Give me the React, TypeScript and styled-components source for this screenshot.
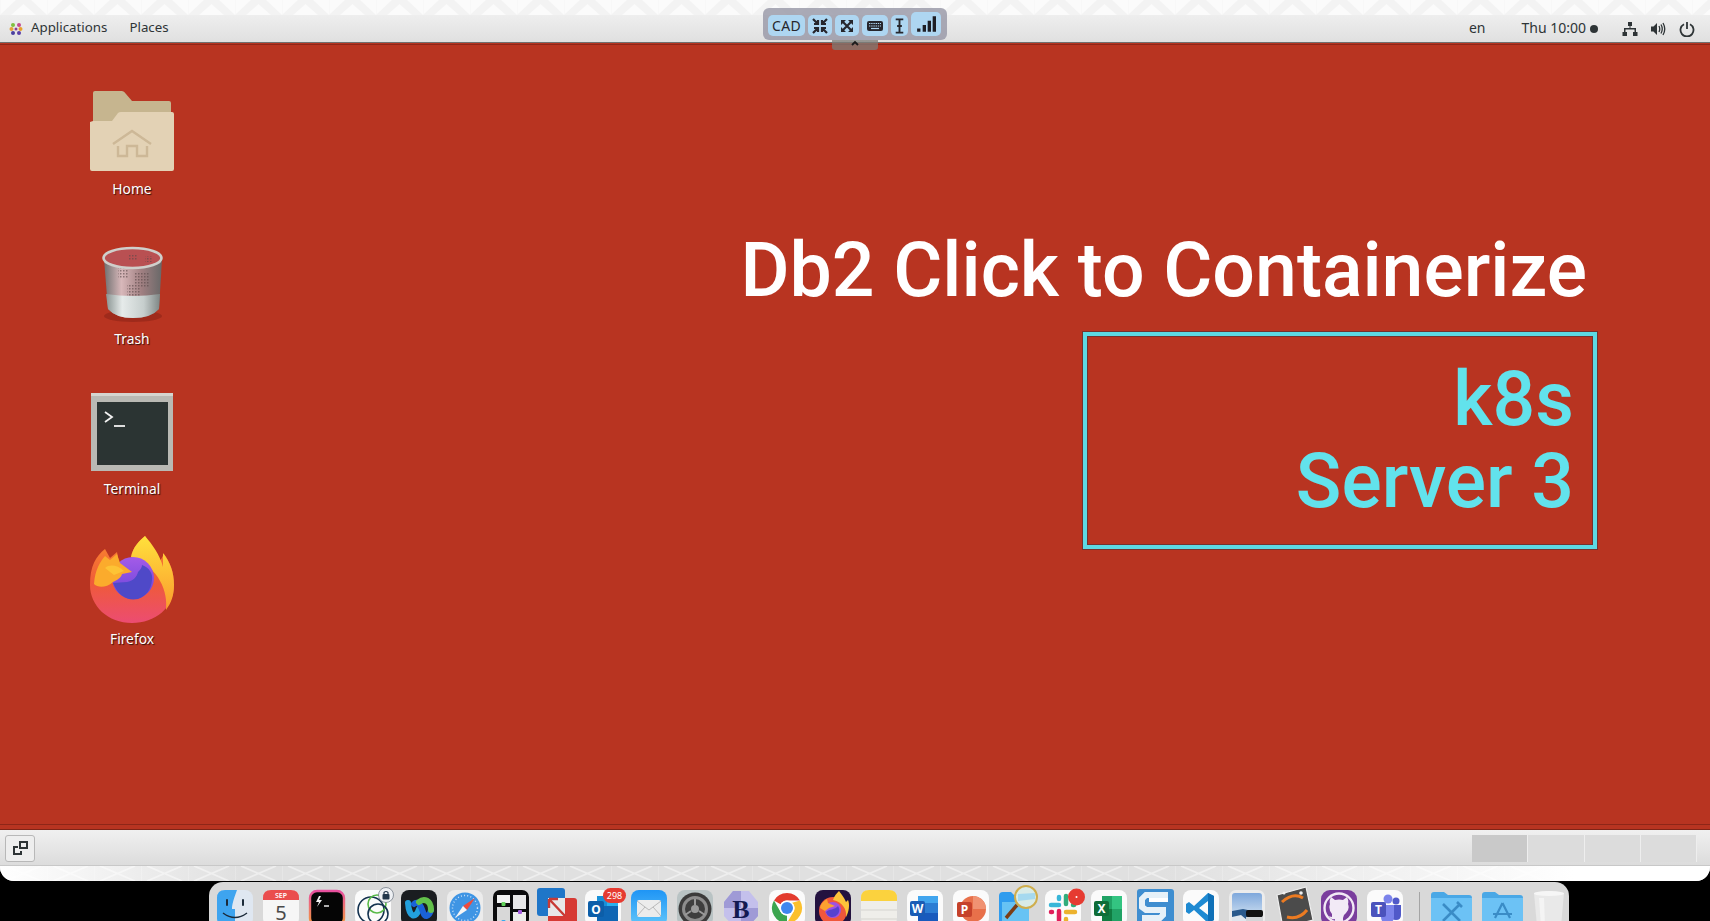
import React from "react";
import styled, { createGlobalStyle } from "styled-components";

const topPattern = encodeURIComponent(
  `<svg xmlns="http://www.w3.org/2000/svg" width="47" height="15"><rect width="47" height="15" fill="#fbfbfb"/><path d="M0 15L16 0H31L47 15H36L23.500 4L11 15Z" fill="#f3f3f3"/><path d="M0 0V15" stroke="#f6f6f6"/></svg>`
);
const bottomPattern = encodeURIComponent(
  `<svg xmlns="http://www.w3.org/2000/svg" width="47" height="15"><path d="M6 0L41 15M41 0L6 15" stroke="#ffffff" stroke-width="1.800" opacity=".45"/><path d="M0 0V15" stroke="#ffffff" opacity=".4"/></svg>`
);

const Global = createGlobalStyle`
  html, body { margin: 0; padding: 0; background: #000; }
  body { font-family: "Noto Sans", "Liberation Sans", sans-serif; }
`;

const Screen = styled.div`
  position: relative;
  width: 1710px;
  height: 921px;
  overflow: hidden;
  background: #000;
  display: flex;
  flex-direction: column;
`;

const Remote = styled.div`
  height: 881px;
  display: flex;
  flex-direction: column;
  border-radius: 0 0 14px 14px;
  overflow: hidden;
  flex: none;
`;

const TopStrip = styled.div`
  height: 15px;
  flex: none;
  background-image: url("data:image/svg+xml,${topPattern}");
`;

const BottomStrip = styled.div`
  height: 15px;
  flex: none;
  background-color: #e2e2e2;
  background-image: url("data:image/svg+xml,${bottomPattern}"),
    linear-gradient(90deg, #ffffff, #e0e0e0 14%, #e0e0e0 68%, #ffffff 92%);
`;

const TopPanel = styled.header`
  height: 27px;
  flex: none;
  display: flex;
  align-items: center;
  background: linear-gradient(#eeeeee, #e0e0e0);
  border-bottom: 1px solid #6f6f6f;
  color: #2e3436;
  font-size: 13.3px;
`;

const PanelLogo = styled.svg`
  margin-left: 9px;
  width: 14px;
  height: 14px;
  flex: none;
`;

const MenuLabel = styled.span<{ $left: number }>`
  margin-left: ${(p) => p.$left}px;
  line-height: 25px;
  padding-bottom: 2px;
  white-space: nowrap;
`;

const StatusLabel = styled(MenuLabel)`
  font-size: 14px;
`;

const PanelSpacer = styled.div`
  flex: 1;
`;

const StatusDot = styled.span`
  width: 8px;
  height: 8px;
  margin-left: 4px;
  border-radius: 50%;
  background: #2e3436;
  flex: none;
`;

const TrayIcon = styled.svg<{ $left: number; $right?: number }>`
  margin-left: ${(p) => p.$left}px;
  margin-right: ${(p) => p.$right ?? 0}px;
  width: 16px;
  height: 16px;
  flex: none;
`;

const Desktop = styled.main`
  flex: 1;
  min-height: 0;
  display: flex;
  background: #b83421;
  box-shadow: inset 0 1px 0 #b83421, inset 0 2px 0 #8e2618, inset 0 -1px 0 #7f2417, inset 0 -5px 0 #b83421, inset 0 -6px 0 #8e2618;
`;

const IconColumn = styled.section`
  width: 120px;
  margin-left: 72px;
  padding-top: 42px;
  flex: none;
`;

const DesktopItem = styled.figure`
  margin: 0;
  height: 150px;
  display: flex;
  flex-direction: column;
  align-items: center;
`;

const DesktopArt = styled.svg`
  width: 90px;
  height: 90px;
  flex: none;
`;

const DesktopLabel = styled.figcaption`
  margin-top: 4px;
  color: #fff;
  font-size: 13.8px;
  line-height: 20px;
  text-shadow: 1px 1px 1px rgba(0, 0, 0, 0.75);
`;

const Stage = styled.section`
  flex: 1;
  display: flex;
  flex-direction: column;
  align-items: flex-end;
  padding: 182px 113px 0 0;
`;

const Title = styled.h1`
  margin: 0 10px 17px 0;
  color: #fff;
  font-family: Roboto, "Noto Sans", sans-serif;
  font-size: 75.2px;
  line-height: 90px;
  font-weight: 500;
  white-space: nowrap;
`;

const ServerBox = styled.div`
  box-sizing: border-box;
  width: 514px;
  height: 217px;
  padding: 22px 19px 0 0;
  border: 4px solid #5cd9e4;
  box-shadow: 0 0 0 1px rgba(60, 50, 60, 0.55), inset 0 0 0 1px rgba(60, 50, 60, 0.55);
  color: #62e2ec;
  font-family: Roboto, "Noto Sans", sans-serif;
  font-size: 75.2px;
  line-height: 82px;
  font-weight: 500;
  text-align: right;
`;

const BottomBar = styled.footer`
  height: 36px;
  box-sizing: border-box;
  flex: none;
  display: flex;
  align-items: center;
  justify-content: space-between;
  padding: 1px 13px 0 5px;
  background: linear-gradient(#f0f0f0, #dcdcdc);
  border-bottom: 1px solid #c8c8c8;
`;

const ShowDesktop = styled.button`
  width: 30px;
  height: 27px;
  padding: 0;
  display: flex;
  align-items: center;
  justify-content: center;
  background: #eeeeee;
  border: 1px solid #b8b8b8;
  border-radius: 3px;
`;

const Workspaces = styled.div`
  display: flex;
  height: 27px;
`;

const Workspace = styled.div<{ $active?: boolean }>`
  box-sizing: border-box;
  width: 56.25px;
  background: ${(p) => (p.$active ? "#c9c9c9" : "#dcdcdc")};
  border-right: 1px solid #eeeeee;
`;

const Dock = styled.nav`
  box-sizing: border-box;
  flex: none;
  width: 1360px;
  height: 39px;
  margin: 1px 0 0 209px;
  padding: 8px 0 0 8px;
  display: flex;
  gap: 10px;
  background: #d9d9d9;
  border-radius: 14px 14px 0 0;
  overflow: hidden;
`;

const DockIcon = styled.svg`
  width: 36px;
  height: 36px;
  flex: none;
  overflow: visible;
`;

const WideDockIcon = styled(DockIcon)<{ $w: number }>`
  width: ${(p) => p.$w}px;
`;

const DockDivider = styled.span`
  width: 1px;
  height: 31px;
  margin: 2px 1px 0 6px;
  background: #a5a5a5;
  flex: none;
`;

const VncBar = styled.div`
  position: absolute;
  top: 8px;
  left: 763px;
  width: 184px;
  height: 32px;
  box-sizing: border-box;
  padding: 4px 5px 4px 5px;
  display: flex;
  align-items: flex-end;
  gap: 3px;
  background: rgba(150, 150, 165, 0.8);
  border-radius: 6px;
`;

const VncButton = styled.div<{ $w: number; $tall?: boolean }>`
  width: ${(p) => p.$w}px;
  height: ${(p) => (p.$tall ? 24 : 21)}px;
  display: flex;
  align-items: center;
  justify-content: center;
  background: #aed6f1;
  border-radius: 5px;
  color: #26262c;
  font-size: 14px;
  letter-spacing: 0.3px;
  flex: none;
`;

const VncIcon = styled.svg`
  width: 18px;
  height: 18px;
`;

const SignalIcon = styled.svg`
  width: 20px;
  height: 20px;
`;

const VncHandle = styled.div`
  position: absolute;
  top: 40px;
  left: 832px;
  width: 46px;
  height: 10px;
  display: flex;
  justify-content: center;
  background: rgba(125, 125, 120, 0.75);
  border-radius: 0 0 3px 3px;
`;

const SansFont = "Noto Sans, Liberation Sans, sans-serif";

const HomeArt = () => (
  <DesktopArt viewBox="87 85 90 90">
    <path d="M95 91H122Q124 91 126 94L132 101H169Q171 101 171 103V125H93V93Q93 91 95 91Z" fill="#c6b58f" />
    <path d="M93 121H112L118 113Q119 112 121 112H172Q174 112 174 114V169Q174 171 172 171H92Q90 171 90 169V122Z" fill="#e3d2b5" />
    <path d="M113 144L132 131L151 144M118 146V156H127V146H137V156H147V146" fill="none" stroke="#cdb897" strokeWidth="2.400" />
  </DesktopArt>
);

const TrashArt = () => (
  <DesktopArt viewBox="87 235 90 90">
    <defs>
      <linearGradient id="tb" x1="0" x2="1" y1="0" y2="0">
        <stop offset="0" stopColor="#6f6f6f" />
        <stop offset=".3" stopColor="#d8b8ba" />
        <stop offset=".65" stopColor="#a07f81" />
        <stop offset="1" stopColor="#686868" />
      </linearGradient>
      <linearGradient id="tl" x1="0" x2="1" y1="0" y2="0">
        <stop offset="0" stopColor="#8a9492" />
        <stop offset=".3" stopColor="#e6ebea" />
        <stop offset=".7" stopColor="#c6cecd" />
        <stop offset="1" stopColor="#7e8685" />
      </linearGradient>
      <pattern id="tm" width="3" height="3" patternUnits="userSpaceOnUse">
        <rect width="1.500" height="1.500" fill="#5a4749" opacity=".6" />
      </pattern>
    </defs>
    <ellipse cx="133" cy="316" rx="29" ry="6" fill="#8d2417" opacity=".6" />
    <path d="M104 259L108 309Q116 318 133 318Q151 318 159 309L162 259Z" fill="url(#tb)" />
    <path d="M106 294Q133 298 160 294L159 309Q151 318 133 318Q116 318 108 309Z" fill="url(#tl)" />
    <path d="M118 268H128V278H118ZM135 272H150V287H135ZM127 285H140V296H127Z" fill="url(#tm)" />
    <ellipse cx="132.500" cy="258" rx="29" ry="10" fill="#b95052" stroke="#cfcfcb" strokeWidth="2.600" />
    <path d="M129 254h8v6h-8zM145 256h8v6h-8z" fill="url(#tm)" />
  </DesktopArt>
);

const TerminalArt = () => (
  <DesktopArt viewBox="87 385 90 90">
    <rect x="91" y="393" width="82" height="78" fill="#b9b9b4" />
    <rect x="91" y="393" width="82" height="3" fill="#d5d5d0" />
    <rect x="97" y="402" width="71" height="63" fill="#2b3433" />
    <path d="M105 412L112 417L105 422" fill="none" stroke="#f2f2f2" strokeWidth="1.800" />
    <path d="M114 426H125" stroke="#f2f2f2" strokeWidth="1.800" />
  </DesktopArt>
);

const FirefoxArt = () => (
  <DesktopArt viewBox="87 535 90 90">
    <defs>
      <linearGradient id="ffb" x1="0" x2="0" y1="0" y2="1">
        <stop offset="0" stopColor="#fb8a2c" />
        <stop offset=".55" stopColor="#ef5a3a" />
        <stop offset="1" stopColor="#ec4c72" />
      </linearGradient>
      <linearGradient id="ffy" x1="0" x2="0" y1="0" y2="1">
        <stop offset="0" stopColor="#ffe13c" />
        <stop offset="1" stopColor="#fb9a2e" />
      </linearGradient>
      <linearGradient id="ffp" x1="0" x2="0" y1="0" y2="1">
        <stop offset="0" stopColor="#a45be8" />
        <stop offset="1" stopColor="#6a45d8" />
      </linearGradient>
    </defs>
    <path d="M90 585C90 566 96 556 105 549L110 558L117 552L119 563C125 559 131 558 136 558L131 557C133 547 139 541 145 536C150 545 156 552 160 561L164 554C170 562 174 572 174 585C174 608 155 623 132 623C108 623 90 606 90 585Z" fill="url(#ffb)" />
    <path d="M131 557C133 547 139 541 145 536C152 544 160 555 163 567L163 553C170 562 174 572 174 585C174 596 171 603 166 610C168 592 160 568 131 557Z" fill="url(#ffy)" />
    <circle cx="133" cy="578" r="21" fill="url(#ffp)" />
    <path d="M113 583L127 582C133 581 137 577 138 572C141 569 142 567 142 565C150 568 153 574 152 580C151 590 146 596 138 599C128 601 119 597 113 583Z" fill="#4f49c8" />
    <path d="M94 584C95 570 100 562 105 556L110 560L117 554L120 563C124 566 128 569 132 572L122 574C121 578 117 580 113 582C106 588 98 588 94 584Z" fill="#fbab2c" />
    <path d="M105 568C110 564 117 565 124 571L114 575Z" fill="#fdc335" />
  </DesktopArt>
);

const iconFont = { fontFamily: SansFont };

const DockIcons: React.ReactNode[] = [
  <DockIcon key="finder" viewBox="0 0 36 36">
    <rect width="36" height="36" rx="8" fill="#dfe7f1" />
    <path d="M8 0H20C17 8 15 14 15 19H18V36H8Q0 36 0 28V8Q0 0 8 0Z" fill="#3ea4ef" />
    <path d="M10 10V15M26 10V15" stroke="#1c2b3a" strokeWidth="2" strokeLinecap="round" />
    <path d="M6 23Q18 32 30 23" fill="none" stroke="#1c2b3a" strokeWidth="1.500" />
  </DockIcon>,
  <DockIcon key="calendar" viewBox="0 0 36 36">
    <rect width="36" height="36" rx="8" fill="#f6f6f6" />
    <path d="M8 0H28Q36 0 36 8V10H0V8Q0 0 8 0Z" fill="#ea4d4d" />
    <text x="18" y="8" textAnchor="middle" fontSize="7" fontWeight="600" fill="#fff" style={iconFont}>SEP</text>
    <text x="18" y="30" textAnchor="middle" fontSize="20" fill="#4a4a4a" style={iconFont}>5</text>
  </DockIcon>,
  <DockIcon key="iterm" viewBox="0 0 36 36">
    <defs>
      <linearGradient id="it" x1="0" x2="0" y1="0" y2="1">
        <stop offset="0" stopColor="#e84f9e" />
        <stop offset="1" stopColor="#f39b3c" />
      </linearGradient>
    </defs>
    <rect x="1" y="1" width="34" height="34" rx="7" fill="#050505" stroke="url(#it)" strokeWidth="2.400" />
    <path d="M10 6L7 12H10L8 17L13 10H10L12 6Z" fill="#f2f2f2" />
    <path d="M15 16H20" stroke="#e8e8e8" strokeWidth="1.400" />
  </DockIcon>,
  <DockIcon key="vpn" viewBox="0 0 36 36">
    <rect width="36" height="36" rx="8" fill="#fbfbfb" />
    <circle cx="16" cy="20" r="13" fill="none" stroke="#14324f" strokeWidth="1.600" />
    <circle cx="22" cy="14" r="9" fill="none" stroke="#58b947" strokeWidth="1.600" />
    <circle cx="23" cy="24" r="10" fill="none" stroke="#14324f" strokeWidth="1.600" />
    <circle cx="31" cy="5" r="7.500" fill="#eef0f3" stroke="#66707c" strokeWidth=".7" />
    <rect x="27.500" y="4" width="7" height="5.500" rx="1" fill="#22364a" />
    <path d="M29 4V2.500Q31 .5 33 2.500V4" fill="none" stroke="#22364a" strokeWidth="1.100" />
  </DockIcon>,
  <DockIcon key="webex" viewBox="0 0 36 36">
    <rect width="36" height="36" rx="8" fill="#1a1d20" />
    <path d="M7 13C8 28 15 29 18 19" fill="none" stroke="#22a0dc" strokeWidth="6" strokeLinecap="round" />
    <path d="M13 14C17 10 20 16 22 22C24 28 28 27 30 20" fill="none" stroke="#1a62d8" strokeWidth="6" strokeLinecap="round" />
    <path d="M18 12C23 8 30 10 30 20" fill="none" stroke="#62c14a" strokeWidth="6" strokeLinecap="round" />
  </DockIcon>,
  <DockIcon key="safari" viewBox="0 0 36 36">
    <rect width="36" height="36" rx="8" fill="#ececec" />
    <circle cx="18" cy="18" r="15.500" fill="#3f95e4" />
    <circle cx="18" cy="18" r="12.500" fill="none" stroke="#cfe4f8" strokeWidth="1.400" strokeDasharray="1 2.200" />
    <path d="M28 8L20 20L16 16Z" fill="#ee4b3d" />
    <path d="M8 28L20 20L16 16Z" fill="#f5f5f5" />
  </DockIcon>,
  <DockIcon key="panes" viewBox="0 0 36 36">
    <rect width="36" height="36" rx="7" fill="#0b0b0c" />
    <rect x="4" y="5" width="13" height="8" fill="#f2f2f2" />
    <rect x="20" y="5" width="13" height="14" fill="#e8e8e8" />
    <rect x="4" y="17" width="13" height="14" fill="#d8d8d8" />
    <rect x="20" y="22" width="13" height="9" fill="#ececec" />
    <rect x="8.500" y="12" width="4" height="4" rx="1" fill="#63d35b" />
    <rect x="25" y="20" width="4" height="4" rx="1" fill="#a45ce0" />
    <rect x="8.500" y="30" width="4" height="4" rx="1" fill="#3aa8ee" />
  </DockIcon>,
  <DockIcon key="vmware" viewBox="0 0 36 36">
    <rect x="-2" y="-2" width="28" height="28" rx="3" fill="#1f76c8" />
    <rect x="9" y="8" width="29" height="30" rx="3" fill="#d63a34" />
    <rect x="9" y="8" width="17" height="18" fill="#e8e8e8" />
    <path d="M10 9L26 26M10 9H19M10 9V18" fill="none" stroke="#c83a34" strokeWidth="2.400" />
  </DockIcon>,
  <DockIcon key="outlook" viewBox="0 0 36 36">
    <rect width="36" height="36" rx="8" fill="#fafafa" />
    <path d="M12 6H33V26H12Z" fill="#1990d8" />
    <path d="M22 6H33V16H22Z" fill="#2ab0ee" />
    <path d="M12 16H33V32H12Z" fill="#0f66b4" />
    <rect x="3" y="11" width="16" height="16" rx="2" fill="#0c5ea8" />
    <text x="11" y="24" textAnchor="middle" fontSize="12" fontWeight="700" fill="#fff" style={iconFont}>O</text>
    <rect x="18" y="-2" width="23" height="15" rx="7.500" fill="#e63b31" />
    <text x="29.500" y="8.500" textAnchor="middle" fontSize="9" fill="#fff" style={iconFont}>298</text>
  </DockIcon>,
  <DockIcon key="mail" viewBox="0 0 36 36">
    <defs>
      <linearGradient id="ml" x1="0" x2="0" y1="0" y2="1">
        <stop offset="0" stopColor="#1f95f5" />
        <stop offset="1" stopColor="#62c6fa" />
      </linearGradient>
    </defs>
    <rect width="36" height="36" rx="8" fill="url(#ml)" />
    <rect x="6" y="10" width="24" height="17" rx="2" fill="#ececec" />
    <path d="M6 11L18 20L30 11M6 26L14 17M30 26L22 17" fill="none" stroke="#b9b9b9" strokeWidth="1" />
  </DockIcon>,
  <DockIcon key="settings" viewBox="0 0 36 36">
    <rect width="36" height="36" rx="8" fill="#b9c3c4" />
    <circle cx="18" cy="19" r="16.500" fill="#3b3b3b" />
    <circle cx="18" cy="19" r="13" fill="#8d8d8d" />
    <circle cx="18" cy="19" r="10" fill="#3e3e3e" />
    <circle cx="18" cy="19" r="4" fill="#9a9a9a" />
    <path d="M18 15V9M14 21L8 25M22 21L28 25" stroke="#9a9a9a" strokeWidth="2" />
  </DockIcon>,
  <DockIcon key="bbedit" viewBox="0 0 36 36">
    <path d="M10 1H26L35 12V26L26 36H10L1 26V12Z" fill="#c4c0ec" />
    <path d="M10 1H18V18H1V12ZM18 18H35V26L26 36H18Z" fill="#9f9ad6" />
    <text x="18" y="28" textAnchor="middle" fontSize="26" fontWeight="700" fill="#141a52" fontFamily="Liberation Serif, serif">B</text>
  </DockIcon>,
  <DockIcon key="chrome" viewBox="0 0 36 36">
    <rect width="36" height="36" rx="8" fill="#fbfbfb" />
    <path d="M18 3A15 15 0 0 1 31 10.500H18A7.500 7.500 0 0 0 11.500 14.200L5 10.500A15 15 0 0 1 18 3Z" fill="#e33b2e" />
    <path d="M31 10.500A15 15 0 0 1 18 33L24.500 21.700A7.500 7.500 0 0 0 24.500 14.200H18Z" fill="#fbc02d" />
    <path d="M18 33A15 15 0 0 1 5 10.500L11.500 21.700A7.500 7.500 0 0 0 18 25.500Z" fill="#3ba54f" />
    <circle cx="18" cy="18" r="7.500" fill="#fff" />
    <circle cx="18" cy="18" r="6" fill="#3f86ee" />
  </DockIcon>,
  <DockIcon key="firefox" viewBox="0 0 36 36">
    <rect width="36" height="36" rx="8" fill="#23123f" />
    <circle cx="18" cy="21" r="14" fill="#f0573a" />
    <path d="M18 10C19 6 22 3 24 1C27 5 29 7 31 12L33 10C35 14 34 22 31 27C32 20 28 12 18 10Z" fill="#fcc43a" />
    <circle cx="18" cy="20" r="8" fill="#a052e0" />
    <path d="M11 22C14 19 20 20 23 16C27 22 21 28 16 27Q12 26 11 22Z" fill="#5842ce" />
    <path d="M5 18C6 13 9 11 12 9L13 13L20 16L14 18L10 21Z" fill="#fca12f" />
  </DockIcon>,
  <DockIcon key="notes" viewBox="0 0 36 36">
    <rect width="36" height="36" rx="8" fill="#efeeea" />
    <path d="M8 0H28Q36 0 36 8V11H0V8Q0 0 8 0Z" fill="#fbd23e" />
    <path d="M0 20H36M0 29H36" stroke="#d5d4cf" strokeWidth="1" />
  </DockIcon>,
  <DockIcon key="word" viewBox="0 0 36 36">
    <rect width="36" height="36" rx="8" fill="#fbfbfb" />
    <path d="M11 6H31V32H11Z" fill="#2b7cd3" />
    <path d="M11 6H31V13H11Z" fill="#41a5ee" />
    <path d="M11 23H31V32H11Z" fill="#185abd" />
    <rect x="3" y="11" width="15" height="15" rx="2" fill="#1a5cb5" />
    <text x="10.500" y="23" textAnchor="middle" fontSize="12" fontWeight="700" fill="#fff" style={iconFont}>W</text>
  </DockIcon>,
  <DockIcon key="ppt" viewBox="0 0 36 36">
    <rect width="36" height="36" rx="8" fill="#fbfbfb" />
    <circle cx="20" cy="19" r="13" fill="#e8704a" />
    <path d="M20 6A13 13 0 0 1 33 19H20Z" fill="#f09272" />
    <rect x="4" y="12" width="15" height="15" rx="2" fill="#c5412a" />
    <text x="11.500" y="24" textAnchor="middle" fontSize="12" fontWeight="700" fill="#fff" style={iconFont}>P</text>
  </DockIcon>,
  <DockIcon key="preview" viewBox="0 0 36 36">
    <path d="M4 2H12L15 5H26V36H4Q0 36 0 32V6Q0 2 4 2Z" fill="#2f9cee" />
    <path d="M3 12H30V36H3Z" fill="#67c3f4" />
    <path d="M18 15L7 28" stroke="#7b3d16" strokeWidth="3.500" />
    <circle cx="27" cy="7" r="11" fill="#d9ebe7" stroke="#cfae4e" strokeWidth="2" />
    <path d="M19 4L36 3V9L19 11Z" fill="#a5d9ef" />
  </DockIcon>,
  <DockIcon key="slack" viewBox="0 0 36 36">
    <rect width="36" height="36" rx="8" fill="#fbfbfb" />
    <g strokeWidth="4.500" strokeLinecap="round" fill="none">
      <path d="M6 15H14M14 7V9" stroke="#38b6d8" />
      <path d="M21 6V14M29 15H28" stroke="#31ad7c" />
      <path d="M21 22H30M21 30V29" stroke="#ecb22e" />
      <path d="M14 21V30M6 22H7" stroke="#e01e5a" />
    </g>
    <circle cx="31.500" cy="7" r="8.500" fill="#e63b31" />
    <circle cx="31.500" cy="7" r="1" fill="#fff" />
  </DockIcon>,
  <DockIcon key="excel" viewBox="0 0 36 36">
    <rect width="36" height="36" rx="8" fill="#fbfbfb" />
    <path d="M11 6H31V32H11Z" fill="#21a366" />
    <path d="M21 6H31V19H21Z" fill="#33c481" />
    <path d="M11 19H21V32H11Z" fill="#107c41" />
    <rect x="3" y="11" width="15" height="15" rx="2" fill="#0f6d38" />
    <text x="10.500" y="23" textAnchor="middle" fontSize="12" fontWeight="700" fill="#fff" style={iconFont}>X</text>
  </DockIcon>,
  <DockIcon key="snagit" viewBox="0 0 36 36">
    <rect y="-1" width="37" height="37" rx="3" fill="#3f8ed0" />
    <path d="M31 5H9L5 9V17L9 20H26V25L23 28H5" fill="none" stroke="#e6f1f8" strokeWidth="6" />
    <path d="M12 8H31V12H12Z" fill="#ffffff" />
  </DockIcon>,
  <DockIcon key="vscode" viewBox="0 0 36 36">
    <rect width="36" height="36" rx="8" fill="#fbfbfb" />
    <path d="M25 3L31 6V30L25 33L11 20L6 24L3 22V14L6 12L11 16ZM25 11L16 18L25 25Z" fill="#1f8ad2" />
    <path d="M25 3L31 6V30L25 33Z" fill="#0f70b7" />
  </DockIcon>,
  <DockIcon key="photo" viewBox="0 0 36 36">
    <defs>
      <linearGradient id="sky" x1="0" x2="0" y1="0" y2="1">
        <stop offset="0" stopColor="#7fa8dc" />
        <stop offset="1" stopColor="#c5d9ee" />
      </linearGradient>
    </defs>
    <rect width="36" height="36" rx="7" fill="#ececec" />
    <rect x="3" y="3" width="30" height="21" rx="3" fill="url(#sky)" />
    <path d="M3 21L14 19L33 23V36H3Z" fill="#2a5a8c" />
    <path d="M3 27L12 25L18 30L12 36H3Z" fill="#dfe7ee" />
    <rect x="17" y="20" width="17" height="7" rx="2" fill="#121212" />
    <rect x="17" y="27" width="17" height="9" fill="#d3d6d8" />
  </DockIcon>,
  <DockIcon key="jupyter" viewBox="0 0 36 36">
    <path d="M2 5L31 -3L38 30L8 38Z" fill="#4b4b4b" stroke="#efefef" strokeWidth="1.200" />
    <path d="M7 12Q18 2 28 8M12 27Q24 30 32 20" fill="none" stroke="#ec7b22" strokeWidth="3" />
    <circle cx="9" cy="3" r="1.500" fill="#efefef" />
    <circle cx="26" cy="3" r="1.800" fill="#efefef" />
    <circle cx="13" cy="34" r="1.800" fill="#efefef" />
  </DockIcon>,
  <DockIcon key="github" viewBox="0 0 36 36">
    <rect width="36" height="36" rx="9" fill="#7a3e9d" />
    <circle cx="18" cy="18" r="14.500" fill="none" stroke="#f2eaf6" strokeWidth="2.400" />
    <path d="M10 7L14 10Q18 9 22 10L26 7Q28 11 27 14Q29 19 25 23Q22 25 22 28V33H14V29Q10 30 8 26Q10 27 11 27V24Q7 19 9 14Q8 11 10 7Z" fill="#f2eaf6" />
  </DockIcon>,
  <DockIcon key="teams" viewBox="0 0 36 36">
    <rect width="36" height="36" rx="8" fill="#fbfbfb" />
    <circle cx="21" cy="9" r="4.500" fill="#7b83eb" />
    <circle cx="29" cy="11" r="3.500" fill="#5059c9" />
    <path d="M24 15H34V25Q34 30 29 30Q24 30 24 25Z" fill="#5059c9" />
    <path d="M14 15H27V27Q27 33 20 33Q14 33 14 27Z" fill="#7b83eb" />
    <rect x="4" y="12" width="15" height="15" rx="2" fill="#4b53bc" />
    <text x="11.500" y="24" textAnchor="middle" fontSize="12" fontWeight="700" fill="#fff" style={iconFont}>T</text>
  </DockIcon>,
];

const FolderIcon = ({ kind }: { kind: "tools" | "apps" }) => (
  <WideDockIcon $w={41} viewBox="0 0 41 36">
    <path d="M3 2H13L17 5H38Q41 5 41 8V36H0V5Q0 2 3 2Z" fill="#4aa8e6" />
    <path d="M0 8H41V36H0Z" fill="#6cc2f5" />
    {kind === "tools" ? (
      <path d="M12 14L29 31M29 14L12 31M26 12L31 17" stroke="#3a8cc6" strokeWidth="2.600" fill="none" />
    ) : (
      <path d="M20.500 13L13 28M20.500 13L28 28M11 24H30" stroke="#3a8cc6" strokeWidth="2.200" fill="none" />
    )}
  </WideDockIcon>
);

const GlassBin = () => (
  <WideDockIcon $w={32} viewBox="0 0 32 36">
    <path d="M1 3Q16 -1 31 3L28 36H4Z" fill="#e9e9e9" />
    <ellipse cx="16" cy="3.500" rx="15" ry="2.500" fill="#f6f6f6" />
    <path d="M6 8L8 36H12L11 8Z" fill="#f4f4f4" />
  </WideDockIcon>
);

export default function App() {
  return (
    <Screen>
      <Global />
      <Remote>
        <TopStrip />
        <TopPanel>
          <PanelLogo viewBox="0 0 14 14">
            <circle cx="4" cy="3" r="2" fill="#7fbf3f" />
            <circle cx="10" cy="3" r="2" fill="#c44a8f" />
            <circle cx="2.500" cy="7" r="2" fill="#e5a33a" />
            <circle cx="11.500" cy="7" r="2" fill="#e8a02c" />
            <circle cx="4" cy="11" r="2" fill="#4a3f9f" />
            <circle cx="10" cy="11" r="2" fill="#5b3fa8" />
            <circle cx="7" cy="7" r="1.500" fill="#8c3f8f" />
          </PanelLogo>
          <MenuLabel $left={8}>Applications</MenuLabel>
          <MenuLabel $left={22}>Places</MenuLabel>
          <PanelSpacer />
          <StatusLabel $left={0}>en</StatusLabel>
          <StatusLabel $left={36}>Thu 10:00</StatusLabel>
          <StatusDot />
          <TrayIcon $left={24} viewBox="0 0 16 16">
            <path d="M6 1H10V5H8.500V7H14V11H15.500V15H11V11H12.500V8.500H3.500V11H5V15H.5V11H2V7H7.500V5H6Z" fill="#2e3436" />
          </TrayIcon>
          <TrayIcon $left={12} viewBox="0 0 16 16">
            <path d="M1 5.500H3.500L7 2V14L3.500 10.500H1Z" fill="#2e3436" />
            <path d="M9 5Q10.500 8 9 11M11 3.500Q13.500 8 11 12.500M13 2Q16.500 8 13 14" fill="none" stroke="#2e3436" strokeWidth="1.300" />
          </TrayIcon>
          <TrayIcon $left={13} $right={15} viewBox="0 0 16 16">
            <path d="M5 3.200A6.500 6.500 0 1 0 11 3.200" fill="none" stroke="#2e3436" strokeWidth="1.800" />
            <path d="M8 1V8" stroke="#2e3436" strokeWidth="1.800" />
          </TrayIcon>
        </TopPanel>
        <Desktop>
          <IconColumn>
            <DesktopItem>
              <HomeArt />
              <DesktopLabel>Home</DesktopLabel>
            </DesktopItem>
            <DesktopItem>
              <TrashArt />
              <DesktopLabel>Trash</DesktopLabel>
            </DesktopItem>
            <DesktopItem>
              <TerminalArt />
              <DesktopLabel>Terminal</DesktopLabel>
            </DesktopItem>
            <DesktopItem>
              <FirefoxArt />
              <DesktopLabel>Firefox</DesktopLabel>
            </DesktopItem>
          </IconColumn>
          <Stage>
            <Title>Db2 Click to Containerize</Title>
            <ServerBox>
              k8s
              <br />
              Server 3
            </ServerBox>
          </Stage>
        </Desktop>
        <BottomBar>
          <ShowDesktop aria-label="Show desktop">
            <svg width="16" height="16" viewBox="0 0 16 16">
              <rect x="8" y="2" width="7" height="6" fill="none" stroke="#2e3436" strokeWidth="2" />
              <path d="M6 7H2V14H9V11" fill="none" stroke="#2e3436" strokeWidth="2" />
            </svg>
          </ShowDesktop>
          <Workspaces>
            <Workspace $active />
            <Workspace />
            <Workspace />
            <Workspace />
          </Workspaces>
        </BottomBar>
        <BottomStrip />
      </Remote>
      <Dock>
        {DockIcons}
        <DockDivider />
        <FolderIcon kind="tools" />
        <FolderIcon kind="apps" />
        <GlassBin />
      </Dock>
      <VncBar>
        <VncButton $w={37}>CAD</VncButton>
        <VncButton $w={24}>
          <VncIcon viewBox="0 0 18 18">
            <path d="M2 2L7 7M7 3V7H3M16 2L11 7M11 3V7H15M2 16L7 11M7 15V11H3M16 16L11 11M11 15V11H15" fill="none" stroke="#26262c" strokeWidth="2.200" />
          </VncIcon>
        </VncButton>
        <VncButton $w={24}>
          <VncIcon viewBox="0 0 18 18">
            <path d="M5 5L13 13M13 5L5 13" stroke="#26262c" strokeWidth="2.200" />
            <path d="M3 3H8L3 8ZM15 3H10L15 8ZM3 15H8L3 10ZM15 15H10L15 10Z" fill="#26262c" />
          </VncIcon>
        </VncButton>
        <VncButton $w={26}>
          <VncIcon viewBox="0 0 18 18">
            <rect x="1" y="4" width="16" height="10" rx="2" fill="#26262c" />
            <path d="M3 6.500H15M3 9H15" stroke="#aed6f1" strokeWidth="1" strokeDasharray="1.400 .8" />
            <path d="M5 11.500H13" stroke="#aed6f1" strokeWidth="1.200" />
          </VncIcon>
        </VncButton>
        <VncButton $w={17}>
          <VncIcon viewBox="0 0 18 18">
            <path d="M5 2H13M5 16H13M9 2V16M6.500 9H11.500" fill="none" stroke="#26262c" strokeWidth="2" />
          </VncIcon>
        </VncButton>
        <VncButton $w={30} $tall>
          <SignalIcon viewBox="0 0 18 18">
            <path d="M1 13H4V16H1ZM6 10H9V16H6ZM10.500 6H13.500V16H10.500ZM15 2H18V16H15Z" fill="#1e1e24" />
          </SignalIcon>
        </VncButton>
      </VncBar>
      <VncHandle>
        <svg width="10" height="8" viewBox="0 0 10 8">
          <path d="M2 5L5 2L8 5" fill="none" stroke="#1b1b1b" strokeWidth="1.800" />
        </svg>
      </VncHandle>
    </Screen>
  );
}
